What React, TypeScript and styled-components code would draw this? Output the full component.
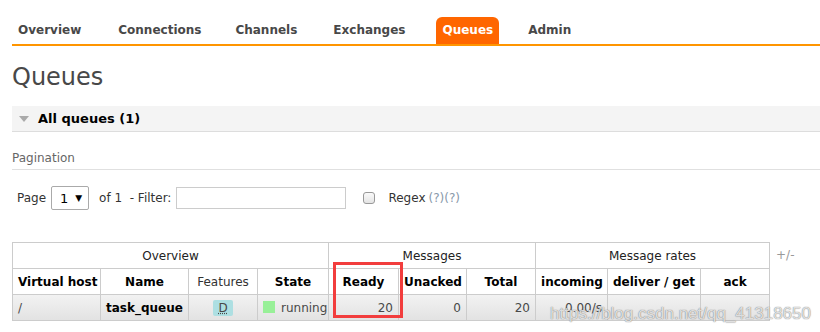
import React from "react";
import styled, { createGlobalStyle } from "styled-components";

const GlobalStyle = createGlobalStyle`
  body {
    margin: 0;
    background: #fff;
    font-family: "DejaVu Sans", Verdana, sans-serif;
    font-size: 12px;
    color: #484848;
  }
`;

const Page = styled.div`
  position: relative;
  width: 820px;
  height: 332px;
  padding-left: 12px;
  box-sizing: border-box;
  overflow: hidden;
`;

const Nav = styled.ul`
  display: flex;
  margin: 0;
  padding: 17px 0 0 0;
  list-style: none;
  border-bottom: 2px solid #ff9500;
`;

const Tab = styled.li<{ active?: boolean; gap: number }>`
  height: 27px;
  line-height: 27px;
  padding: 0 6px;
  margin-right: ${(p) => p.gap}px;
  font-weight: bold;
  font-size: 12px;
  color: ${(p) => (p.active ? "#fff" : "#484848")};
  background: ${(p) => (p.active ? "#ff6600" : "transparent")};
  border-radius: 6px 6px 0 0;
`;

const Title = styled.h1`
  margin: 14px 0 12px;
  font-size: 24px;
  font-weight: normal;
  line-height: 34px;
  color: #484848;
`;

const SectionHeader = styled.div`
  display: flex;
  align-items: center;
  height: 25px;
  background: #f4f4f4;
  border-bottom: 1px solid #ddd;
  font-weight: bold;
  font-size: 13px;
  color: #000;
`;

const Arrow = styled.span`
  width: 0;
  height: 0;
  margin: 0 9px 0 7px;
  border-left: 5px solid transparent;
  border-right: 5px solid transparent;
  border-top: 6px solid #aaa;
`;

const SubLabel = styled.div`
  margin-top: 19px;
  padding-bottom: 4px;
  border-bottom: 1px solid #e0e0e0;
  font-size: 12px;
  color: #666;
`;

const FilterRow = styled.div`
  display: flex;
  align-items: center;
  gap: 5px;
  margin-top: 16px;
  padding-left: 5px;
  color: #333;
`;

const Select = styled.div`
  display: flex;
  align-items: center;
  justify-content: space-between;
  box-sizing: border-box;
  width: 38px;
  height: 24px;
  padding: 0 6px 0 8px;
  margin-right: 5px;
  border: 1px solid #aaa;
  border-radius: 2px;
  color: #000;
  font-size: 13px;
  span {
    font-size: 9px;
  }
`;

const TextInput = styled.div`
  box-sizing: border-box;
  width: 170px;
  height: 22px;
  border: 1px solid #ccc;
  margin-right: 8px;
`;

const Check = styled.div`
  box-sizing: border-box;
  width: 12px;
  height: 12px;
  margin: 0 8px 0 4px;
  border: 1px solid #999;
  border-radius: 3px;
  background: linear-gradient(#fafafa, #e4e4e4);
`;

const Help = styled.span`
  color: #8899aa;
  margin-left: -2px;
`;

const TableArea = styled.div`
  display: flex;
  align-items: flex-start;
  gap: 6px;
  margin-top: 32px;
`;

const TableWrap = styled.div`
  position: relative;
`;

const Table = styled.table`
  width: 757px;
  table-layout: fixed;
  border-collapse: collapse;
  font-size: 12px;
  th,
  td {
    height: 25px;
    padding: 0 5px;
    border: 1px solid #ccc;
    white-space: nowrap;
    overflow: hidden;
  }
  th {
    color: #000;
    font-weight: bold;
    text-align: center;
  }
  thead tr:first-child th {
    font-weight: normal;
    color: #222;
  }
  th.plain {
    font-weight: normal;
    color: #333;
  }
  tbody tr {
    background: linear-gradient(#f2f2f2, #e2e2e2);
  }
`;

const Cell = styled.td<{ align?: string; bold?: boolean }>`
  text-align: ${(p) => p.align || "left"};
  font-weight: ${(p) => (p.bold ? "bold" : "normal")};
  color: ${(p) => (p.bold ? "#000" : "#484848")};
`;

const Badge = styled.abbr`
  display: inline-block;
  padding: 1px 5px;
  background: #addfe2;
  border-radius: 2px;
  color: #484848;
  text-decoration: underline dotted;
`;

const StateDot = styled.span`
  display: inline-block;
  width: 12px;
  height: 12px;
  margin-right: 6px;
  vertical-align: -1px;
  background: #98f098;
`;

const Highlight = styled.div`
  position: absolute;
  left: 321px;
  top: 20px;
  width: 70px;
  height: 56px;
  box-sizing: border-box;
  border: 3px solid #f23d3d;
  pointer-events: none;
`;

const PlusMinus = styled.span`
  margin-top: 6px;
  color: #999;
  font-size: 12px;
`;

const Watermark = styled.div`
  position: absolute;
  right: 9px;
  bottom: 8px;
  font-family: "Liberation Sans", Arial, sans-serif;
  font-size: 17px;
  color: rgba(255, 255, 255, 0.75);
  text-shadow: 0 0 1px rgba(90, 90, 90, 0.6), 0 0 1px rgba(90, 90, 90, 0.6);
  pointer-events: none;
`;

const tabs = [
  { label: "Overview", gap: 25 },
  { label: "Connections", gap: 22 },
  { label: "Channels", gap: 24 },
  { label: "Exchanges", gap: 25 },
  { label: "Queues", gap: 23, active: true },
  { label: "Admin", gap: 0 },
];

const colWidths = [88, 88, 69, 71, 70, 68, 69, 72, 93, 69];

export default function App() {
  return (
    <Page>
      <GlobalStyle />
      <Nav>
        {tabs.map((t) => (
          <Tab key={t.label} active={t.active} gap={t.gap}>
            {t.label}
          </Tab>
        ))}
      </Nav>
      <Title>Queues</Title>
      <SectionHeader>
        <Arrow />
        All queues (1)
      </SectionHeader>
      <SubLabel>Pagination</SubLabel>
      <FilterRow>
        Page
        <Select>
          1<span>▼</span>
        </Select>
        of 1&nbsp; - Filter:
        <TextInput />
        <Check />
        Regex <Help>(?)(?)</Help>
      </FilterRow>
      <TableArea>
        <TableWrap>
          <Table>
            <colgroup>
              {colWidths.map((w, i) => (
                <col key={i} style={{ width: w }} />
              ))}
            </colgroup>
            <thead>
              <tr>
                <th colSpan={4}>Overview</th>
                <th colSpan={3}>Messages</th>
                <th colSpan={3}>Message rates</th>
              </tr>
              <tr>
                <th>Virtual host</th>
                <th>Name</th>
                <th className="plain">Features</th>
                <th>State</th>
                <th>Ready</th>
                <th>Unacked</th>
                <th>Total</th>
                <th>incoming</th>
                <th>deliver / get</th>
                <th>ack</th>
              </tr>
            </thead>
            <tbody>
              <tr>
                <Cell>/</Cell>
                <Cell bold>task_queue</Cell>
                <Cell align="center">
                  <Badge title="durable: true">D</Badge>
                </Cell>
                <Cell>
                  <StateDot />
                  running
                </Cell>
                <Cell align="right">20</Cell>
                <Cell align="right">0</Cell>
                <Cell align="right">20</Cell>
                <Cell align="right">0.00/s</Cell>
                <Cell />
                <Cell />
              </tr>
            </tbody>
          </Table>
          <Highlight />
        </TableWrap>
        <PlusMinus>+/-</PlusMinus>
      </TableArea>
      <Watermark>https://blog.csdn.net/qq_41318650</Watermark>
    </Page>
  );
}
